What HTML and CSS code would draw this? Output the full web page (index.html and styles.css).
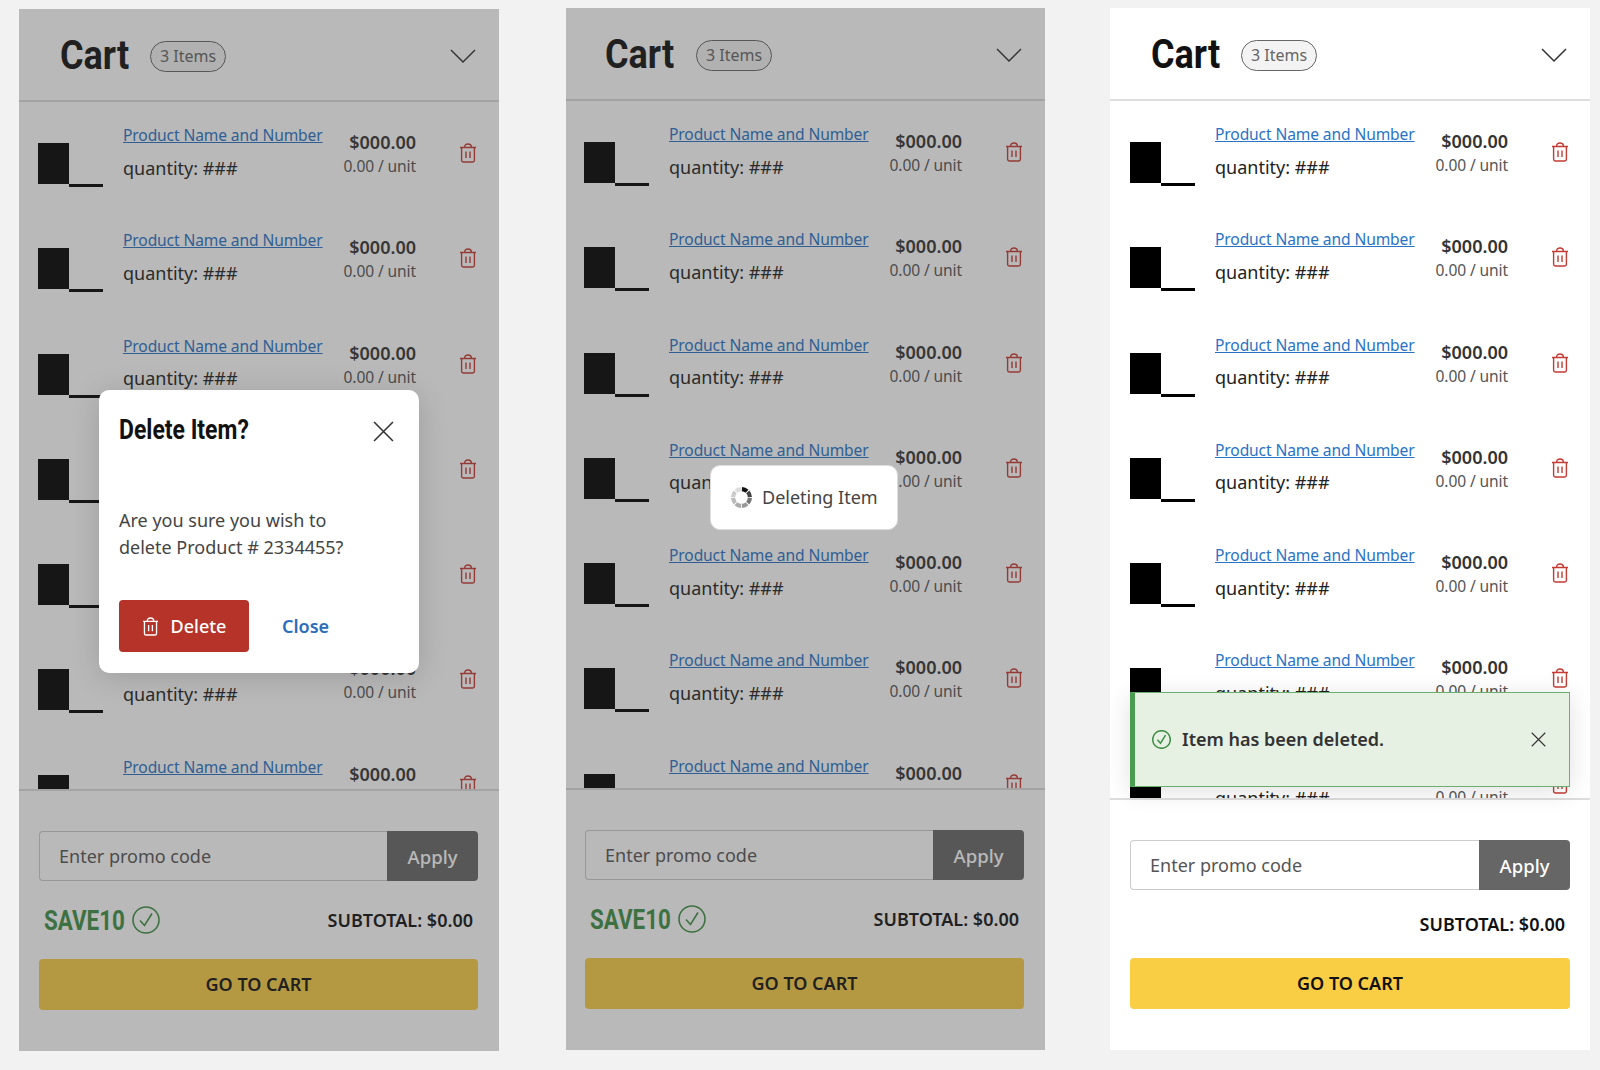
FILE: index.html
```html
<!DOCTYPE html>
<html lang="en">
<head>
    <meta charset="UTF-8">
    <meta name="viewport" content="width=device-width, initial-scale=1.0">
    <title>Cart States</title>
    <link rel="stylesheet" href="styles.css">
</head>
<body>
    <svg class="icon-defs" aria-hidden="true">
        <symbol id="icon-trash" viewBox="0 0 18 20">
            <path d="M1 4.5h16M2.6 4.5v12.8c0 1 .7 1.7 1.7 1.7h9.4c1 0 1.7-.7 1.7-1.7V4.5M5.6 4.3C5.6 2.2 7 1 9 1s3.4 1.2 3.4 3.3M7 8.5v6.5M11 8.5v6.5" fill="none" stroke="currentColor" stroke-width="1.4"/>
        </symbol>
        <symbol id="icon-check" viewBox="0 0 28 28">
            <circle cx="14" cy="14" r="13" fill="none" stroke="currentColor"/>
            <path d="M8 14.5l4.5 5L20 7.5" fill="none" stroke="currentColor"/>
        </symbol>
        <symbol id="icon-close" viewBox="0 0 20 20">
            <path d="M1 1l18 18M19 1L1 19" fill="none" stroke="currentColor" stroke-width="1.5"/>
        </symbol>
        <symbol id="icon-chevron" viewBox="0 0 26 15">
            <path d="M1 1l12 12L25 1" fill="none" stroke="currentColor" stroke-width="1.5"/>
        </symbol>
    </svg>

    <main class="board">
        <!-- Delete confirmation -->
        <section class="panel panel-confirm">
            <header class="panel-head">
                <h1 class="panel-title"><span>Cart</span></h1>
                <span class="count-badge">3 Items</span>
                <svg class="chevron"><use href="#icon-chevron"/></svg>
            </header>
            <div class="cart-list">
                <article class="cart-row"><div class="thumb"><i></i><b></b></div><div class="row-info"><a href="#">Product Name and Number</a><p>quantity: ###</p></div><div class="row-price"><strong>$000.00</strong><span>0.00 / unit</span></div><svg class="trash"><use href="#icon-trash"/></svg></article>
                <article class="cart-row"><div class="thumb"><i></i><b></b></div><div class="row-info"><a href="#">Product Name and Number</a><p>quantity: ###</p></div><div class="row-price"><strong>$000.00</strong><span>0.00 / unit</span></div><svg class="trash"><use href="#icon-trash"/></svg></article>
                <article class="cart-row"><div class="thumb"><i></i><b></b></div><div class="row-info"><a href="#">Product Name and Number</a><p>quantity: ###</p></div><div class="row-price"><strong>$000.00</strong><span>0.00 / unit</span></div><svg class="trash"><use href="#icon-trash"/></svg></article>
                <article class="cart-row"><div class="thumb"><i></i><b></b></div><div class="row-info"><a href="#">Product Name and Number</a><p>quantity: ###</p></div><div class="row-price"><strong>$000.00</strong><span>0.00 / unit</span></div><svg class="trash"><use href="#icon-trash"/></svg></article>
                <article class="cart-row"><div class="thumb"><i></i><b></b></div><div class="row-info"><a href="#">Product Name and Number</a><p>quantity: ###</p></div><div class="row-price"><strong>$000.00</strong><span>0.00 / unit</span></div><svg class="trash"><use href="#icon-trash"/></svg></article>
                <article class="cart-row"><div class="thumb"><i></i><b></b></div><div class="row-info"><a href="#">Product Name and Number</a><p>quantity: ###</p></div><div class="row-price"><strong>$000.00</strong><span>0.00 / unit</span></div><svg class="trash"><use href="#icon-trash"/></svg></article>
                <article class="cart-row"><div class="thumb"><i></i><b></b></div><div class="row-info"><a href="#">Product Name and Number</a><p>quantity: ###</p></div><div class="row-price"><strong>$000.00</strong><span>0.00 / unit</span></div><svg class="trash"><use href="#icon-trash"/></svg></article>
            </div>
            <footer class="panel-foot">
                <div class="promo"><span class="promo-input">Enter promo code</span><button class="promo-apply">Apply</button></div>
                <div class="totals">
                    <div class="promo-code"><span>SAVE10</span><svg class="promo-check"><use href="#icon-check"/></svg></div>
                    <div class="subtotal">SUBTOTAL: $0.00</div>
                </div>
                <button class="go-cart">GO TO CART</button>
            </footer>
            <div class="dim"></div>
            <div class="modal">
                <div class="modal-head">
                    <h2><span>Delete Item?</span></h2>
                    <svg class="modal-close"><use href="#icon-close"/></svg>
                </div>
                <p class="modal-text">Are you sure you wish to<br>delete Product # 2334455?</p>
                <div class="modal-actions">
                    <button class="btn-delete"><svg class="btn-icon"><use href="#icon-trash"/></svg>Delete</button>
                    <a class="btn-close" href="#">Close</a>
                </div>
            </div>
        </section>

        <!-- Deleting spinner -->
        <section class="panel panel-loading">
            <header class="panel-head">
                <h1 class="panel-title"><span>Cart</span></h1>
                <span class="count-badge">3 Items</span>
                <svg class="chevron"><use href="#icon-chevron"/></svg>
            </header>
            <div class="cart-list">
                <article class="cart-row"><div class="thumb"><i></i><b></b></div><div class="row-info"><a href="#">Product Name and Number</a><p>quantity: ###</p></div><div class="row-price"><strong>$000.00</strong><span>0.00 / unit</span></div><svg class="trash"><use href="#icon-trash"/></svg></article>
                <article class="cart-row"><div class="thumb"><i></i><b></b></div><div class="row-info"><a href="#">Product Name and Number</a><p>quantity: ###</p></div><div class="row-price"><strong>$000.00</strong><span>0.00 / unit</span></div><svg class="trash"><use href="#icon-trash"/></svg></article>
                <article class="cart-row"><div class="thumb"><i></i><b></b></div><div class="row-info"><a href="#">Product Name and Number</a><p>quantity: ###</p></div><div class="row-price"><strong>$000.00</strong><span>0.00 / unit</span></div><svg class="trash"><use href="#icon-trash"/></svg></article>
                <article class="cart-row"><div class="thumb"><i></i><b></b></div><div class="row-info"><a href="#">Product Name and Number</a><p>quantity: ###</p></div><div class="row-price"><strong>$000.00</strong><span>0.00 / unit</span></div><svg class="trash"><use href="#icon-trash"/></svg></article>
                <article class="cart-row"><div class="thumb"><i></i><b></b></div><div class="row-info"><a href="#">Product Name and Number</a><p>quantity: ###</p></div><div class="row-price"><strong>$000.00</strong><span>0.00 / unit</span></div><svg class="trash"><use href="#icon-trash"/></svg></article>
                <article class="cart-row"><div class="thumb"><i></i><b></b></div><div class="row-info"><a href="#">Product Name and Number</a><p>quantity: ###</p></div><div class="row-price"><strong>$000.00</strong><span>0.00 / unit</span></div><svg class="trash"><use href="#icon-trash"/></svg></article>
                <article class="cart-row"><div class="thumb"><i></i><b></b></div><div class="row-info"><a href="#">Product Name and Number</a><p>quantity: ###</p></div><div class="row-price"><strong>$000.00</strong><span>0.00 / unit</span></div><svg class="trash"><use href="#icon-trash"/></svg></article>
            </div>
            <footer class="panel-foot">
                <div class="promo"><span class="promo-input">Enter promo code</span><button class="promo-apply">Apply</button></div>
                <div class="totals">
                    <div class="promo-code"><span>SAVE10</span><svg class="promo-check"><use href="#icon-check"/></svg></div>
                    <div class="subtotal">SUBTOTAL: $0.00</div>
                </div>
                <button class="go-cart">GO TO CART</button>
            </footer>
            <div class="dim"></div>
            <div class="loading">
                <svg class="spinner" viewBox="0 0 20 20">
                    <g fill="none" stroke-width="4">
                        <path d="M10.4 2a8 8 0 0 1 4.9 2" stroke="#111"/>
                        <path d="M16 4.7A8 8 0 0 1 18 9.6" stroke="#444"/>
                        <path d="M18 10.4a8 8 0 0 1-2 4.9" stroke="#777"/>
                        <path d="M15.3 16a8 8 0 0 1-4.9 2" stroke="#999"/>
                        <path d="M9.6 18a8 8 0 0 1-4.9-2" stroke="#aaa"/>
                        <path d="M4 15.3A8 8 0 0 1 2 10.4" stroke="#bbb"/>
                        <path d="M2 9.6a8 8 0 0 1 2-4.9" stroke="#ccc"/>
                        <path d="M4.7 4A8 8 0 0 1 9.6 2" stroke="#ddd"/>
                    </g>
                </svg>
                <span class="loading-text">Deleting Item</span>
            </div>
        </section>

        <!-- Item deleted toast -->
        <section class="panel panel-deleted">
            <header class="panel-head">
                <h1 class="panel-title"><span>Cart</span></h1>
                <span class="count-badge">3 Items</span>
                <svg class="chevron"><use href="#icon-chevron"/></svg>
            </header>
            <div class="cart-list">
                <article class="cart-row"><div class="thumb"><i></i><b></b></div><div class="row-info"><a href="#">Product Name and Number</a><p>quantity: ###</p></div><div class="row-price"><strong>$000.00</strong><span>0.00 / unit</span></div><svg class="trash"><use href="#icon-trash"/></svg></article>
                <article class="cart-row"><div class="thumb"><i></i><b></b></div><div class="row-info"><a href="#">Product Name and Number</a><p>quantity: ###</p></div><div class="row-price"><strong>$000.00</strong><span>0.00 / unit</span></div><svg class="trash"><use href="#icon-trash"/></svg></article>
                <article class="cart-row"><div class="thumb"><i></i><b></b></div><div class="row-info"><a href="#">Product Name and Number</a><p>quantity: ###</p></div><div class="row-price"><strong>$000.00</strong><span>0.00 / unit</span></div><svg class="trash"><use href="#icon-trash"/></svg></article>
                <article class="cart-row"><div class="thumb"><i></i><b></b></div><div class="row-info"><a href="#">Product Name and Number</a><p>quantity: ###</p></div><div class="row-price"><strong>$000.00</strong><span>0.00 / unit</span></div><svg class="trash"><use href="#icon-trash"/></svg></article>
                <article class="cart-row"><div class="thumb"><i></i><b></b></div><div class="row-info"><a href="#">Product Name and Number</a><p>quantity: ###</p></div><div class="row-price"><strong>$000.00</strong><span>0.00 / unit</span></div><svg class="trash"><use href="#icon-trash"/></svg></article>
                <article class="cart-row"><div class="thumb"><i></i><b></b></div><div class="row-info"><a href="#">Product Name and Number</a><p>quantity: ###</p></div><div class="row-price"><strong>$000.00</strong><span>0.00 / unit</span></div><svg class="trash"><use href="#icon-trash"/></svg></article>
                <article class="cart-row"><div class="thumb"><i></i><b></b></div><div class="row-info"><a href="#">Product Name and Number</a><p>quantity: ###</p></div><div class="row-price"><strong>$000.00</strong><span>0.00 / unit</span></div><svg class="trash"><use href="#icon-trash"/></svg></article>
            </div>
            <footer class="panel-foot">
                <div class="promo"><span class="promo-input">Enter promo code</span><button class="promo-apply">Apply</button></div>
                <div class="totals">
                    <div class="subtotal">SUBTOTAL: $0.00</div>
                </div>
                <button class="go-cart">GO TO CART</button>
            </footer>
            <div class="toast">
                <svg class="toast-check"><use href="#icon-check"/></svg>
                <span class="toast-text">Item has been deleted.</span>
                <svg class="toast-close"><use href="#icon-close"/></svg>
            </div>
        </section>
    </main>
</body>
</html>
```

FILE: styles.css
```css
* {
    box-sizing: border-box;
}

body {
    font-family: "Noto Sans", "Open Sans", sans-serif;
    margin: 0;
    padding: 0;
    background-color: #f2f2f2;
    color: #222;
}

.icon-defs {
    display: none;
}

.board {
    display: flex;
    align-items: flex-start;
    padding-left: 19px;
}

.panel {
    position: relative;
    display: flex;
    flex-direction: column;
    flex: none;
    width: 480px;
    height: 1042px;
    margin-top: 8px;
    background-color: white;
    overflow: hidden;
}

.panel-confirm {
    margin-top: 9px;
}

.panel-loading {
    width: 479px;
    margin-left: 67px;
}

.panel-deleted {
    margin-left: 65px;
}

.panel-head {
    display: flex;
    align-items: center;
    flex: none;
    height: 93px;
    padding: 3px 23px 0 41px;
    border-bottom: 2px solid #ddd;
}

.panel-loading .panel-head {
    padding-left: 39px;
}

.panel-loading .panel-title {
    width: 91px;
}

.panel-title {
    width: 90px;
    margin: 0;
    font-family: Roboto, sans-serif;
    font-size: 40px;
    font-weight: 700;
    line-height: 1;
    color: #111;
}

.panel-title span,
.modal-head h2 span {
    display: inline-block;
    transform: scaleX(0.9);
    transform-origin: left center;
}

.modal-head h2 span {
    transform: scaleX(0.85);
}

.count-badge {
    height: 31px;
    padding: 0 9px;
    border: 1.5px solid #666;
    border-radius: 16px;
    background-color: #f3f3f3;
    font-size: 16px;
    line-height: 28px;
    color: #666;
}

.chevron {
    width: 26px;
    height: 15px;
    margin-left: auto;
    color: #333;
}

.cart-list {
    flex: 1;
    min-height: 0;
    overflow: hidden;
}

.cart-row {
    display: flex;
    height: 105.25px;
    padding: 21px 0 0 19px;
}

.panel-loading .cart-row {
    padding-left: 18px;
}

.panel-deleted .cart-row {
    padding-left: 20px;
}

.thumb {
    display: flex;
    align-items: flex-end;
    flex: none;
    width: 66px;
    height: 44px;
    margin: 20px 19px 0 0;
}

.thumb i {
    width: 31px;
    height: 41px;
    margin-bottom: 3px;
    background-color: black;
}

.thumb b {
    width: 34px;
    height: 3px;
    background-color: black;
}

.row-info {
    flex: none;
    width: 217px;
    padding-top: 1px;
}

.row-info a {
    display: block;
    width: fit-content;
    font-size: 15.6px;
    letter-spacing: -0.12px;
    line-height: 22px;
    color: #2873c6;
}

.row-info p {
    margin: 9.5px 0 0;
    font-size: 18px;
    line-height: 24px;
    color: #222;
}

.row-price {
    display: flex;
    flex-direction: column;
    align-items: flex-end;
    flex: none;
    width: 76px;
    margin-top: 8px;
    white-space: nowrap;
}

.row-price strong {
    font-size: 18px;
    font-weight: 600;
    line-height: 23px;
    color: #333;
}

.row-price span {
    font-size: 15.6px;
    letter-spacing: -0.12px;
    line-height: 24px;
    color: #555;
}

.trash {
    flex: none;
    width: 18px;
    height: 20px;
    margin: 20px 0 0 43px;
    color: #c53a33;
}

.panel-foot {
    flex: none;
    padding: 40px 21px 41px 20px;
    border-top: 2px solid #ddd;
}

.panel-loading .panel-foot {
    padding-left: 19px;
}

.panel-deleted .panel-foot {
    padding: 40px 20px 41px;
}

.promo {
    display: flex;
    height: 50px;
}

.promo-input {
    flex: 1;
    padding-left: 19px;
    border: 1.5px solid #ccc;
    border-right: none;
    border-radius: 4px 0 0 4px;
    font-size: 18px;
    line-height: 48px;
    color: #555;
}

.promo-apply {
    width: 91px;
    border: none;
    border-radius: 0 4px 4px 0;
    background-color: #666;
    font-family: inherit;
    font-size: 18.5px;
    font-weight: 500;
    color: white;
}

.totals {
    display: flex;
    justify-content: space-between;
    align-items: center;
    height: 78px;
    padding: 0 5px;
}

.panel-deleted .totals {
    justify-content: flex-end;
    height: 68px;
}

.promo-code {
    display: flex;
    align-items: center;
    gap: 8px;
    font-family: Roboto, sans-serif;
    font-size: 28px;
    font-weight: 700;
    color: #3f8f45;
}

.promo-code span {
    display: inline-block;
    width: 80px;
    white-space: nowrap;
    transform: scaleX(0.8);
    transform-origin: left center;
}

.promo-check {
    width: 28px;
    height: 28px;
    stroke-width: 1.6;
}

.subtotal {
    font-size: 18px;
    font-weight: 600;
    color: #111;
}

.go-cart {
    display: block;
    width: 100%;
    height: 51px;
    padding: 0 0 2px;
    border: none;
    border-radius: 4px;
    background-color: #f9ce45;
    font-family: inherit;
    font-size: 18px;
    font-weight: 600;
    color: #111;
}

/* dimmed state */
.dim {
    position: absolute;
    inset: 0;
    background-color: rgba(61, 61, 61, 0.36);
}

.modal {
    position: absolute;
    left: 80px;
    top: 381px;
    width: 320px;
    height: 283px;
    padding: 24px 20px;
    border-radius: 10px;
    background-color: white;
    box-shadow: 0 4px 30px rgba(0, 0, 0, 0.15);
}

.modal-head {
    display: flex;
    justify-content: space-between;
    align-items: flex-start;
}

.modal-head h2 {
    margin: 0;
    font-family: Roboto, sans-serif;
    font-size: 27px;
    font-weight: 700;
    line-height: 32px;
    color: #111;
    white-space: nowrap;
}

.modal-close {
    width: 21px;
    height: 21px;
    margin: 7px 5px 0 0;
    color: #333;
}

.modal-text {
    margin: 61px 0 0;
    font-size: 18px;
    line-height: 27px;
    color: #444;
}

.modal-actions {
    display: flex;
    align-items: center;
    margin-top: 39px;
}

.btn-delete {
    display: flex;
    align-items: center;
    justify-content: center;
    gap: 12px;
    width: 130px;
    height: 52px;
    border: none;
    border-radius: 4px;
    background-color: #b53328;
    font-family: inherit;
    font-size: 18px;
    font-weight: 500;
    color: white;
}

.btn-icon {
    width: 17px;
    height: 19px;
}

.btn-close {
    margin-left: 33px;
    font-size: 18px;
    font-weight: 600;
    color: #2a6ebb;
    text-decoration: none;
}

.loading {
    position: absolute;
    left: 144px;
    top: 457px;
    display: flex;
    align-items: center;
    gap: 10px;
    width: 188px;
    height: 65px;
    padding-left: 20px;
    border: 1px solid #ddd;
    border-radius: 10px;
    background-color: white;
    font-size: 18px;
    color: #444;
}

.loading-text {
    margin-top: -2px;
}

.spinner {
    width: 21px;
    height: 21px;
}

.toast {
    position: absolute;
    left: 20px;
    top: 684px;
    display: flex;
    align-items: center;
    width: 440px;
    height: 95px;
    padding: 0 23px 0 17px;
    border: 1px solid #6ab06e;
    border-left: 5px solid #4a9d4f;
    background-color: #e7f1e3;
    box-shadow: 0 4px 24px rgba(0, 0, 0, 0.12);
}

.toast-check {
    width: 19px;
    height: 19px;
    color: #3f8f45;
    stroke-width: 2.2;
}

.toast-text {
    margin: -2px 0 0 11px;
    font-size: 18px;
    font-weight: 600;
    color: #333;
}

.toast-close {
    width: 15px;
    height: 15px;
    margin-left: auto;
    color: #333;
}
```
